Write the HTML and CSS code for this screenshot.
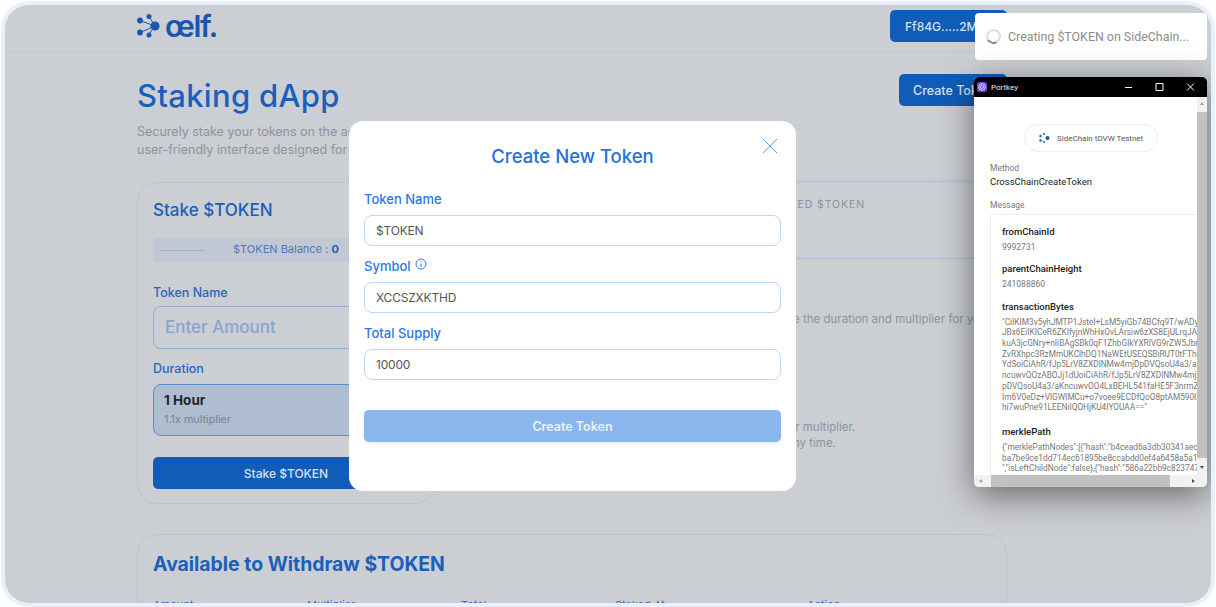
FILE: index.html
```html
<!DOCTYPE html>
<html lang="en">

<head>
    <meta charset="UTF-8">
    <meta name="viewport" content="width=device-width, initial-scale=1.0">
    <title>Staking dApp</title>
    <link rel="stylesheet" href="styles.css">
</head>

<body>
    <div class="frame">
        <div class="page">
            <header class="topbar">
                <div class="topbar-inner">
                    <div class="logo">
                        <svg width="25" height="26" viewBox="0 0 25 26">
                            <path d="M3 7.500L18 13M12 3.500L18 13M3 19.500L18 13M12 21L18 13" stroke="#1a56ad" stroke-width="1" fill="none" />
                            <circle cx="18" cy="13" r="4.600" fill="#1a56ad" />
                            <circle cx="12" cy="3.500" r="2.500" fill="#1a56ad" />
                            <circle cx="3" cy="7.500" r="2.900" fill="#1a56ad" />
                            <circle cx="3" cy="19.500" r="2.900" fill="#1a56ad" />
                            <circle cx="12" cy="22" r="2.500" fill="#1a56ad" />
                        </svg>
                        <span class="logo-text">œlf.</span>
                    </div>
                    <button class="btn wallet-btn">Ff84G.....2M6Gv</button>
                </div>
            </header>

            <main class="content">
                <div class="title-row">
                    <h1>Staking dApp</h1>
                    <button class="btn create-btn">Create Token</button>
                </div>
                <p class="intro">Securely stake your tokens on the aelf blockchain, earn rewards, and withdraw anytime—all within a<br>user-friendly interface designed for everyone who wants simple staking.</p>

                <div class="stake-row">
                    <section class="card stake-card">
                        <h2>Stake $TOKEN</h2>
                        <div class="balance">
                            <span class="balance-line"></span>
                            <span class="balance-text">$TOKEN Balance : <b>0</b></span>
                        </div>
                        <label class="field-label">Token Name</label>
                        <div class="amount-input">Enter Amount</div>
                        <label class="field-label">Duration</label>
                        <div class="duration">
                            <strong>1 Hour</strong>
                            <span>1.1x multiplier</span>
                        </div>
                        <button class="btn stake-btn">Stake $TOKEN</button>
                    </section>

                    <section class="info">
                        <div class="stats">
                            <span>Staked $Token</span>
                        </div>
                        <p class="info-line first">Choose the duration and multiplier for your</p>
                        <p class="info-line second">Longer stakes earn rewards at their multiplier.</p>
                        <p class="info-line third">Withdraw your tokens at any time.</p>
                    </section>
                </div>

                <section class="card withdraw-card">
                    <h2>Available to Withdraw $TOKEN</h2>
                    <div class="table-head">
                        <span>Amount</span>
                        <span>Multiplier</span>
                        <span>Total</span>
                        <span>Staked At</span>
                        <span>Action</span>
                    </div>
                </section>
            </main>

            <div class="modal">
                <h3>Create New Token</h3>
                <svg class="modal-close" width="16" height="16" viewBox="0 0 16 16">
                    <path d="M1 1L15 15M15 1L1 15" stroke="#5c9ce8" stroke-width="1" fill="none" />
                </svg>
                <label class="modal-label">Token Name</label>
                <div class="modal-input">$TOKEN</div>
                <label class="modal-label">Symbol
                    <svg class="info-icon" width="12" height="12" viewBox="0 0 12 12">
                        <circle cx="6" cy="6" r="5" stroke="#2b78e4" stroke-width="1" fill="none" />
                        <path d="M6 5.500V9M6 3V4" stroke="#2b78e4" stroke-width="1" fill="none" />
                    </svg>
                </label>
                <div class="modal-input">XCCSZXKTHD</div>
                <label class="modal-label">Total Supply</label>
                <div class="modal-input">10000</div>
                <button class="modal-btn">Create Token</button>
            </div>

            <div class="toast">
                <span class="spinner"></span>
                <span class="toast-text">Creating $TOKEN on SideChain...</span>
            </div>

            <div class="popup">
                <div class="popup-title">
                    <span class="popup-icon">
                        <svg width="8" height="8" viewBox="0 0 8 8">
                            <circle cx="4" cy="4" r="3.300" stroke="#fff" stroke-width="0.800" fill="none" />
                            <circle cx="4" cy="4" r="1.500" stroke="#fff" stroke-width="0.800" fill="none" />
                        </svg>
                    </span>
                    <span class="popup-name">Portkey</span>
                    <svg class="win-ctrl" width="78" height="20" viewBox="0 0 78 20">
                        <path d="M3 10.500H10M34 6.500H41V13.500H34ZM65 6.500L72 13.500M72 6.500L65 13.500" stroke="#fff" stroke-width="1" fill="none" />
                    </svg>
                </div>
                <div class="popup-body">
                    <div class="popup-scroll">
                        <div class="chain-pill">
                            <svg width="12" height="10" viewBox="0 0 12 10">
                                <circle cx="8.500" cy="5" r="2" fill="#1a56ad" />
                                <circle cx="5" cy="1" r="1" fill="#1a56ad" />
                                <circle cx="1.500" cy="3" r="1.200" fill="#1a56ad" />
                                <circle cx="1.500" cy="7.500" r="1.200" fill="#1a56ad" />
                                <circle cx="5" cy="9" r="1" fill="#1a56ad" />
                            </svg>
                            <span>SideChain tDVW Testnet</span>
                        </div>
                        <div class="meta-label">Method</div>
                        <div class="meta-value">CrossChainCreateToken</div>
                        <div class="meta-label message-label">Message</div>
                        <div class="message-box">
                            <div class="msg-key">fromChainId</div>
                            <div class="msg-val">9992731</div>
                            <div class="msg-key">parentChainHeight</div>
                            <div class="msg-val">241088860</div>
                            <div class="msg-key">transactionBytes</div>
                            <div class="msg-val long">"CiIKIM3v5yhJMTP1Jstel+LsM5yiGb74BCfq9T/wADy
JBx6EiIKICeR6ZKIfyjnWhHxOvLArsiw6zXS8EjULrqJAc
kuA3jcGNry+nIiBAgSBk0qF1ZhbGlkYXRlVG9rZW5Jbr
ZvRXhpc3RzMmUKClhDQ1NaWEtUSEQSBiRUT0tFThi
YdSoiCiAhR/fJp5LrV8ZXDlNMw4mjDpDVQsoU4a3/aK
ncuwvOOzABOJj1dUoiCiAhR/fJp5LrV8ZXDlNMw4mjD
pDVQsoU4a3/aKncuwvOO4LxBEHL541faHE5F3nrmZ
Im6V0eDz+VlGWIMCu+o7voee9ECDfQoO8ptAM590IZ
hi7wuPne91LEENiIQOHjKU4IYOUAA=="</div>
                            <div class="msg-key">merklePath</div>
                            <div class="msg-val long">{"merklePathNodes":[{"hash":"b4cead6a3db30341aec
ba7be9ce1dd714ec61895be8ccabdd0ef4a6458a5a1f
","isLeftChildNode":false},{"hash":"586a22bb9c823747
","isLeftChildNode":true},{"hash":"f1a2</div>
                        </div>
                    </div>
                    <div class="vbar">
                        <span class="arrow-up"></span>
                        <span class="vthumb"></span>
                        <span class="arrow-down"></span>
                    </div>
                    <div class="hbar">
                        <span class="arrow-left"></span>
                        <span class="hthumb"></span>
                        <span class="arrow-right"></span>
                    </div>
                    <div class="corner"></div>
                </div>
            </div>
        </div>
    </div>
</body>

</html>
```

FILE: styles.css
```css
* {
    box-sizing: border-box;
}

body {
    margin: 0;
    height: 607px;
    overflow: hidden;
    background: #ffffff;
    font-family: Inter, "Open Sans", sans-serif;
}

h1,
h2,
h3,
p {
    margin: 0;
}

.frame {
    margin: 1px 1px 0;
    height: 606px;
    padding: 4px 4px 4px;
    background: #e7f0fb;
    border-radius: 28px;
}

.page {
    position: relative;
    height: 598px;
    overflow: hidden;
    background: #cbced3;
    border-radius: 24px;
}

.btn {
    border: none;
    border-radius: 5px;
    background: #105cb8;
    color: #d3e0f1;
    font-family: inherit;
    font-weight: 500;
}

/* top bar */
.topbar {
    height: 48px;
    border-bottom: 1px solid #bcc8da;
}

.topbar-inner {
    width: 870px;
    margin-left: 132px;
    display: flex;
    justify-content: space-between;
}

.logo {
    display: flex;
    align-items: flex-start;
    gap: 3px;
    padding-top: 8px;
}

.logo-text {
    color: #1a56ad;
    font-size: 30px;
    font-weight: 600;
    line-height: 26px;
    letter-spacing: -1.300px;
}

.wallet-btn {
    width: 117px;
    height: 32px;
    margin-top: 5px;
    padding: 0 0 0 15px;
    font-size: 12px;
    text-align: left;
    white-space: nowrap;
    overflow: hidden;
}

/* main column */
.content {
    width: 870px;
    margin-left: 132px;
}

.title-row {
    display: flex;
    justify-content: space-between;
    align-items: flex-start;
    height: 70px;
}

h1 {
    margin-top: 24px;
    color: #1a5fbb;
    font-size: 31px;
    line-height: 38px;
    font-weight: 500;
    letter-spacing: 0.300px;
}

.create-btn {
    width: 108px;
    height: 32px;
    margin-top: 21px;
    padding: 0 0 0 14px;
    font-size: 12.500px;
    text-align: left;
}

.intro {
    color: #8f939b;
    font-size: 12.500px;
    line-height: 18px;
    white-space: nowrap;
}

.stake-row {
    display: flex;
    gap: 30px;
    margin-top: 23px;
}

.card {
    border: 1px solid #b6c4da;
    border-radius: 20px;
    padding: 0 15px;
}

h2 {
    color: #1a5fbb;
    font-size: 17px;
    line-height: 24px;
    font-weight: 500;
}

.stake-card {
    width: 298px;
    height: 322px;
    padding-top: 15px;
    flex: none;
}

.balance {
    display: flex;
    align-items: center;
    height: 24px;
    margin-top: 16px;
    padding-left: 7px;
    background: #c1c8d4;
    border-radius: 4px;
}

.balance-line {
    width: 45px;
    height: 1px;
    background: #9fb2d0;
}

.balance-text {
    margin-left: 28px;
    margin-bottom: 2px;
    color: #4f78b8;
    font-size: 11px;
    white-space: nowrap;
}

.balance-text b {
    color: #1a5fbb;
}

.field-label {
    display: block;
    margin-top: 12px;
    color: #2a66bd;
    font-size: 12.500px;
    line-height: 16px;
    font-weight: 500;
}

.balance + .field-label {
    margin-top: 23px;
}

.amount-input {
    height: 43px;
    margin-top: 5px;
    padding: 0 11px;
    border: 1px solid #97afd7;
    border-radius: 8px;
    color: #8aa3cf;
    font-size: 17px;
    line-height: 40px;
    font-weight: 500;
}

.duration {
    height: 52px;
    margin-top: 7px;
    padding: 7px 10px 0;
    background: #afbdd0;
    border: 1px solid #5c8bcc;
    border-radius: 8px;
}

.duration strong {
    display: block;
    color: #22252b;
    font-size: 13.500px;
    line-height: 17px;
    font-weight: 700;
}

.duration span {
    display: block;
    margin-top: 3px;
    color: #7c828c;
    font-size: 10.800px;
    line-height: 15px;
}

.stake-btn {
    display: block;
    width: 100%;
    height: 32px;
    margin-top: 21px;
    font-size: 12px;
}

/* right hand column */
.info {
    flex: 1;
    margin-top: -2px;
}

.stats {
    height: 79px;
    padding: 15px 0 0 302px;
    border-top: 3px solid #bcc6d6;
    border-bottom: 1px solid #aebfdb;
    color: #8f939b;
    font-size: 10.500px;
    letter-spacing: 0.900px;
    text-transform: uppercase;
}

.info-line {
    color: #8f939b;
    font-size: 11.500px;
    line-height: 16px;
    white-space: nowrap;
}

.info-line.first {
    margin-top: 52px;
    padding-left: 293px;
}

.info-line.second {
    margin-top: 92px;
    padding-left: 142px;
}

.info-line.third {
    padding-left: 186px;
}

.withdraw-card {
    width: 870px;
    height: 120px;
    margin-top: 30px;
    padding-top: 17px;
}

.withdraw-card h2 {
    font-size: 19.400px;
    font-weight: 700;
}

.table-head {
    display: grid;
    grid-template-columns: 154px 154px 154px 192px auto;
    margin-top: 22px;
    color: #3b6fc0;
    font-size: 11px;
}

/* modal */
.modal {
    position: absolute;
    left: 344px;
    top: 116px;
    width: 447px;
    height: 370px;
    padding: 22px 15px 0;
    background: #ffffff;
    border-radius: 14px;
}

.modal h3 {
    color: #2470dc;
    font-size: 18.500px;
    line-height: 26px;
    font-weight: 500;
    text-align: center;
}

.modal-close {
    position: absolute;
    top: 17px;
    right: 18px;
}

.modal-label {
    display: flex;
    align-items: flex-start;
    gap: 4px;
    margin-top: 13px;
    color: #2b78e4;
    font-size: 13px;
    line-height: 16px;
    font-weight: 500;
}

h3 + .modal-close + .modal-label {
    margin-top: 22px;
}

.modal-input {
    height: 31px;
    margin-top: 8px;
    padding-left: 11px;
    border: 1px solid #bcd6f8;
    border-radius: 8px;
    color: #555555;
    font-size: 12px;
    line-height: 29px;
    letter-spacing: -0.200px;
}

.modal-input + .modal-label {
    margin-top: 12px;
}

.modal-btn {
    display: block;
    width: 100%;
    height: 32px;
    margin-top: 30px;
    border: none;
    border-radius: 5px;
    background: #8ab6ee;
    color: #e8f1fc;
    font-family: inherit;
    font-size: 12.500px;
    font-weight: 600;
    box-shadow: 0 1px 4px rgba(100, 150, 220, 0.2);
}

/* toast */
.toast {
    position: absolute;
    left: 970px;
    top: 8px;
    width: 232px;
    height: 47px;
    display: flex;
    align-items: center;
    padding-left: 11px;
    gap: 7px;
    background: #ffffff;
    border-radius: 4px;
}

.spinner {
    width: 15px;
    height: 15px;
    border: 2px solid #dddddd;
    border-bottom-color: #888888;
    border-radius: 50%;
    transform: rotate(15deg);
}

.toast-text {
    color: #8c8c8c;
    font-family: Roboto, sans-serif;
    font-size: 12.400px;
    white-space: nowrap;
}

/* portkey window */
.popup {
    position: absolute;
    left: 969px;
    top: 72px;
    width: 233px;
    height: 410px;
    overflow: hidden;
    background: #ffffff;
    border-radius: 5px;
    box-shadow: 0 8px 34px rgba(0, 0, 0, 0.5);
    font-family: Roboto, sans-serif;
}

.popup-title {
    display: flex;
    align-items: center;
    height: 20px;
    padding-left: 3px;
    background: #000000;
}

.popup-icon {
    display: flex;
    align-items: center;
    justify-content: center;
    width: 10px;
    height: 10px;
    background: #6a3ff0;
    border-radius: 2px;
}

.popup-name {
    margin-left: 4px;
    color: #e8e8e8;
    font-size: 8px;
}

.win-ctrl {
    margin-left: auto;
    margin-right: 7px;
}

.popup-body {
    display: grid;
    grid-template-columns: 223px 10px;
    grid-template-rows: 378px 12px;
}

.popup-scroll {
    overflow: hidden;
    padding: 27px 0 0 16px;
}

.chain-pill {
    display: flex;
    align-items: center;
    gap: 6px;
    width: 134px;
    height: 28px;
    margin-left: 34px;
    padding-left: 14px;
    border: 1px solid #eeeeee;
    border-radius: 14px;
    color: #555555;
    font-size: 8px;
    white-space: nowrap;
}

.meta-label {
    margin-top: 10px;
    color: #777777;
    font-size: 8.500px;
    line-height: 12px;
}

.meta-value {
    margin-top: 1px;
    color: #222222;
    font-size: 9.500px;
    line-height: 14px;
}

.message-label {
    margin-top: 10px;
}

.message-box {
    margin-top: 3px;
    padding: 10px 0 0 11px;
    border: 1px solid #eeeeee;
    border-right: none;
    border-radius: 4px 0 0 4px;
}

.msg-key {
    margin-top: 8px;
    color: #222222;
    font-size: 9.500px;
    line-height: 14px;
    font-weight: 500;
}

.msg-key:first-child {
    margin-top: 0;
}

.msg-val {
    margin-top: 3px;
    margin-bottom: 9.300px;
    color: #777777;
    font-size: 8.500px;
    line-height: 11px;
}

.msg-val.long {
    margin-top: 3px;
    margin-bottom: 12px;
    overflow: hidden;
    font-size: 8.300px;
    white-space: pre;
    line-height: 10.700px;
}

.vbar {
    display: flex;
    flex-direction: column;
    background: #f1f1f1;
}

.vthumb {
    height: 346px;
    margin-top: 10px;
    background: #c1c1c1;
}

.arrow-up {
    width: 0;
    height: 0;
    margin: 3px 0 -3px 3px;
    border: 2px solid transparent;
    border-bottom: 3px solid #a0a0a0;
}

.arrow-down {
    width: 0;
    height: 0;
    margin: 8px 0 0 3px;
    border: 2px solid transparent;
    border-top: 3px solid #505050;
}

.hbar {
    display: flex;
    align-items: center;
    background: #f1f1f1;
}

.hthumb {
    width: 180px;
    height: 12px;
    margin-left: 9px;
    background: #c1c1c1;
}

.arrow-left {
    width: 0;
    height: 0;
    margin-left: 3px;
    border: 2px solid transparent;
    border-right: 3px solid #a0a0a0;
}

.arrow-right {
    width: 0;
    height: 0;
    margin-left: 22px;
    border: 2px solid transparent;
    border-left: 3px solid #505050;
}

.corner {
    background: #f1f1f1;
}
```
